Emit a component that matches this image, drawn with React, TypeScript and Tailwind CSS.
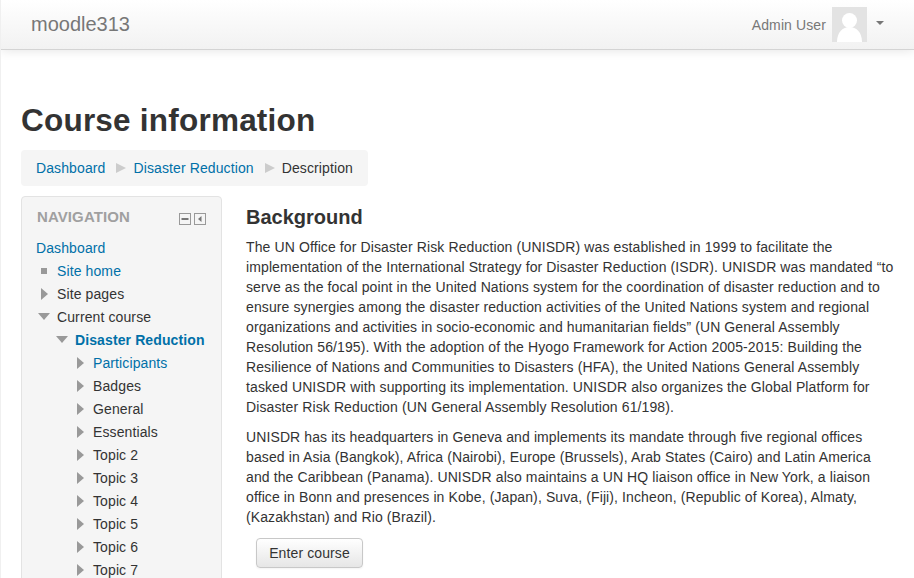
import React from 'react';

const TOPICS = ['Participants', 'Badges', 'General', 'Essentials', 'Topic 2', 'Topic 3', 'Topic 4', 'Topic 5', 'Topic 6', 'Topic 7'];

const Right = () => (
  <span className="flex w-[21px] pl-[5px]">
    <svg width="7" height="12" viewBox="0 0 7 12" className="shrink-0"><path d="M0 0 L7 6 L0 12 Z" fill="#999" /></svg>
  </span>
);
const Down = () => (
  <span className="flex w-[21px] pl-[2px]">
    <svg width="12" height="7" viewBox="0 0 12 7" className="shrink-0"><path d="M0 0 H12 L6 7 Z" fill="#999" /></svg>
  </span>
);
const Sep = () => (
  <svg width="10" height="10" viewBox="0 0 10 10" className="ml-[11px] mr-[7px]"><path d="M0 0 L10 5 L0 10 Z" fill="#ccc" /></svg>
);

const Row = ({ indent = '', children }: { indent?: string; children: React.ReactNode }) => (
  <div className={`flex h-[23px] items-center ${indent}`}>{children}</div>
);

export default function App() {
  return (
    <div className="h-[578px] overflow-hidden border-l border-[#f0f0f0] bg-white font-['Liberation_Sans',Arial,sans-serif] text-[14px] leading-[20px] tracking-[0.11px] text-[#333]">
      <header className="flex h-[50px] items-center justify-between border-b border-[#d4d4d4] bg-gradient-to-b from-white to-[#f2f2f2] pl-[30px] pr-[30px] shadow-[0_1px_10px_rgba(0,0,0,0.1)]">
        <span className="mb-[2px] text-[20px] tracking-normal text-[#777]">moodle313</span>
        <div className="flex items-center">
          <span className="text-[#777]">Admin User</span>
          <div className="ml-[6px] flex h-[35px] w-[35px] items-end justify-center overflow-hidden bg-[#e3e3e3]">
            <svg width="35" height="35" viewBox="0 0 35 35"><circle cx="17.5" cy="13.5" r="7.5" fill="#fff" /><path d="M5 35 C5 25 11 20 17.5 20 C24 20 30 25 30 35 Z" fill="#fff" /></svg>
          </div>
          <span className="mb-[3px] ml-[9px] h-0 w-0 border-x-4 border-t-4 border-x-transparent border-t-[#777]" />
        </div>
      </header>

      <main className="pl-[20px] pr-[21px] pt-[50px]">
        <h1 className="text-[31.5px] font-bold leading-[40px] tracking-[0.22px]">Course information</h1>
        <nav className="mt-[10px] flex h-[36px] w-[347px] items-center rounded-[4px] bg-[#f5f5f5] px-[15px]">
          <a className="text-[#0070a8]">Dashboard</a>
          <Sep />
          <a className="text-[#0070a8]">Disaster Reduction</a>
          <Sep />
          <span>Description</span>
        </nav>

        <div className="mt-[10px] flex gap-[24px]">
          <aside className="h-[400px] w-[201px] shrink-0 rounded-[4px] border border-[#e3e3e3] bg-[#f5f5f5] pl-[14px] pr-[9px] pt-[10px]">
            <div className="flex h-[20px] items-center justify-between pl-[1px] pr-[6px]">
              <span className="text-[15px] font-bold tracking-[0.1px] text-[#a0a0a0]">NAVIGATION</span>
              <span className="mt-[3px] flex gap-[3px]">
                <svg width="12" height="12" viewBox="0 0 12 12"><rect x=".5" y=".5" width="11" height="11" fill="none" stroke="#999" /><rect x="2.5" y="5" width="7" height="2" fill="#777" /></svg>
                <svg width="12" height="12" viewBox="0 0 12 12"><rect x=".5" y=".5" width="11" height="11" fill="none" stroke="#999" /><path d="M7.5 3 L4 6 L7.5 9 Z" fill="#777" /></svg>
              </span>
            </div>
            <div className="mt-[9px]">
              <Row><a className="text-[#0070a8]">Dashboard</a></Row>
              <Row><span className="flex w-[21px] pl-[5px]"><span className="h-[6px] w-[6px] bg-[#999]" /></span><a className="text-[#0070a8]">Site home</a></Row>
              <Row><Right />Site pages</Row>
              <Row><Down />Current course</Row>
              <Row indent="pl-[18px]"><Down /><a className="font-bold text-[#0070a8]">Disaster Reduction</a></Row>
              {TOPICS.map((t, i) => (
                <Row key={t} indent="pl-[36px]">
                  <Right />
                  {i === 0 ? <a className="text-[#0070a8]">{t}</a> : t}
                </Row>
              ))}
            </div>
          </aside>

          <section className="min-w-0 flex-1">
            <h3 className="mb-[5px] mt-[6px] text-[20px] font-bold leading-[30px] tracking-normal">Background</h3>
            <p className="mb-[10px] w-[648px]">
              The UN Office for Disaster Risk Reduction (UNISDR) was established in 1999 to facilitate the implementation of the International Strategy for Disaster Reduction (ISDR). UNISDR was mandated “to serve as the focal point in the United Nations system for the coordination of disaster reduction and to ensure synergies among the disaster reduction activities of the United Nations system and regional organizations and activities in socio-economic and humanitarian fields” (UN General Assembly Resolution 56/195). With the adoption of the Hyogo Framework for Action 2005-2015: Building the Resilience of Nations and Communities to Disasters (HFA), the United Nations General Assembly tasked UNISDR with supporting its implementation. UNISDR also organizes the Global Platform for Disaster Risk Reduction (UN General Assembly Resolution 61/198).
            </p>
            <p className="mb-[11px] w-[648px]">
              UNISDR has its headquarters in Geneva and implements its mandate through five regional offices based in Asia (Bangkok), Africa (Nairobi), Europe (Brussels), Arab States (Cairo) and Latin America and the Caribbean (Panama). UNISDR also maintains a UN HQ liaison office in New York, a liaison office in Bonn and presences in Kobe, (Japan), Suva, (Fiji), Incheon, (Republic of Korea), Almaty, (Kazakhstan) and Rio (Brazil).
            </p>
            <button className="ml-[10px] h-[30px] w-[107px] rounded-[4px] border border-[#c8c8c8] bg-gradient-to-b from-white to-[#e6e6e6] text-[#333] shadow-[0_1px_2px_rgba(0,0,0,0.05)]">Enter course</button>
          </section>
        </div>
      </main>
    </div>
  );
}
